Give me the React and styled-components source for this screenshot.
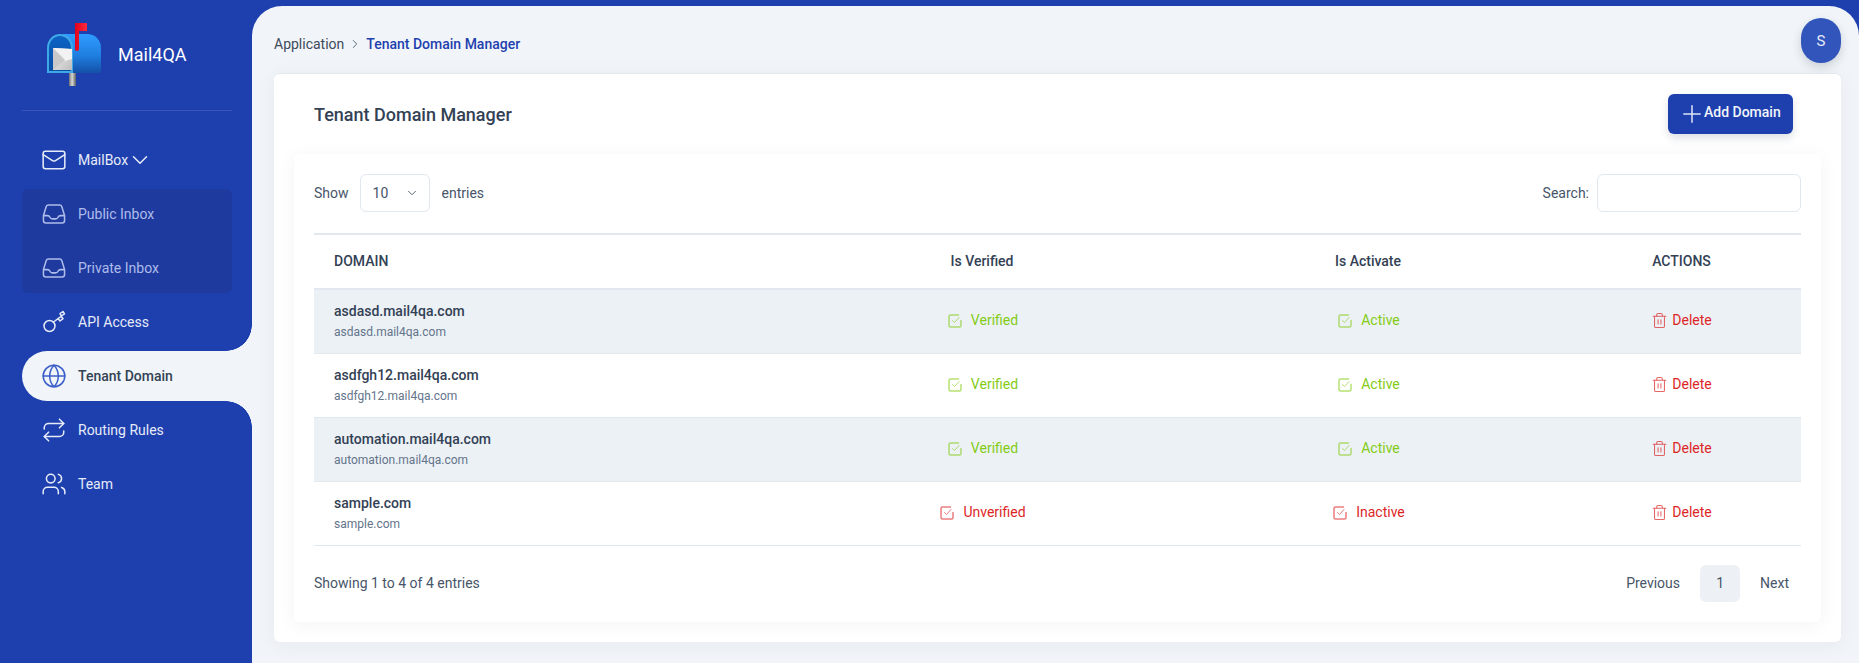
import React from 'react';
import styled, { createGlobalStyle, css } from 'styled-components';
import { Mail, ChevronDown, ChevronRight, Globe, Repeat, Users, Trash2, Plus } from 'lucide-react';

const domains = [
  { name: 'asdasd.mail4qa.com', verified: true },
  { name: 'asdfgh12.mail4qa.com', verified: true },
  { name: 'automation.mail4qa.com', verified: true },
  { name: 'sample.com', verified: false },
];

const InboxIcon = () => (
  <svg width="26" height="26" viewBox="0 0 24 24" fill="none" stroke="currentColor" strokeWidth="1.4" strokeLinecap="round" strokeLinejoin="round">
    <path d="M2.25 13.500h3.860a2.250 2.250 0 0 1 2.012 1.244l.256.512a2.250 2.250 0 0 0 2.013 1.244h3.218a2.250 2.250 0 0 0 2.013-1.244l.256-.512a2.250 2.250 0 0 1 2.013-1.244h3.859m-19.500.338V18a2.250 2.250 0 0 0 2.250 2.250h15A2.250 2.250 0 0 0 21.750 18v-4.162c0-.224-.034-.447-.1-.661L19.240 5.338a2.250 2.250 0 0 0-2.150-1.588H6.911a2.250 2.250 0 0 0-2.150 1.588L2.350 13.177a2.250 2.250 0 0 0-.1.661Z" />
  </svg>
);

const KeyIcon = () => (
  <svg width="26" height="26" viewBox="0 0 26 26" fill="none" stroke="currentColor" strokeWidth="1.5" strokeLinecap="round" strokeLinejoin="round">
    <circle cx="8.500" cy="17" r="5.500" />
    <path d="M12.500 13 22.500 5.500M17 9.600l2 2.400 3-2.400-2-2.400M20.500 7l-1.500-2.500 3-2 1.500 2.500" />
  </svg>
);

const CheckBoxIcon = () => (
  <svg width="14" height="14" viewBox="0 0 14 14" fill="none" stroke="currentColor" strokeWidth="1.5" strokeLinecap="round" strokeLinejoin="round">
    <path d="M13 6.500v5a1.500 1.500 0 0 1-1.500 1.500h-9A1.500 1.500 0 0 1 1 11.500v-9A1.500 1.500 0 0 1 2.500 1h8" />
    <path d="M4.500 6.500 6.500 8.500 11 3.500" strokeWidth="1" />
  </svg>
);

const MailboxLogo = () => (
  <svg width="56" height="64" viewBox="0 0 56 64">
    <defs>
      <linearGradient id="boxBody" x1="0" y1="0" x2="0" y2="1">
        <stop offset="0" stopColor="#2f9bff" />
        <stop offset="0.55" stopColor="#1f7fe0" />
        <stop offset="1" stopColor="#1450a8" />
      </linearGradient>
      <linearGradient id="boxDoor" x1="0" y1="0" x2="0" y2="1">
        <stop offset="0" stopColor="#0c62c4" />
        <stop offset="1" stopColor="#0a4fa6" />
      </linearGradient>
      <linearGradient id="letter" x1="0" y1="0" x2="1" y2="1">
        <stop offset="0" stopColor="#f4f4f4" />
        <stop offset="1" stopColor="#bdbdbd" />
      </linearGradient>
      <linearGradient id="post" x1="0" y1="0" x2="1" y2="0">
        <stop offset="0" stopColor="#6f6f6f" />
        <stop offset="0.45" stopColor="#d8d8d8" />
        <stop offset="1" stopColor="#5c5c5c" />
      </linearGradient>
      <linearGradient id="flag" x1="0" y1="0" x2="1" y2="0">
        <stop offset="0" stopColor="#e0001b" />
        <stop offset="1" stopColor="#ff2d3d" />
      </linearGradient>
    </defs>
    <rect x="23" y="49" width="7" height="14" fill="url(#post)" />
    <path d="M17 11h24c8 0 14 6 14 14v25H17z" fill="url(#boxBody)" />
    <path d="M1 50V25C1 17 7 11 14 11s13 6 13 14v25z" fill="#3fa9e8" />
    <path d="M3 48V25c0-6.500 5-12 11-12s11 5.500 11 12v23z" fill="url(#boxDoor)" />
    <path d="M7 25 26 26V47H7z" fill="url(#letter)" />
    <path d="M7 25 26 26V36L19 38z" fill="#f2f2f2" />
    <path d="M7 25 19 37 7 47z" fill="#c9c9c9" />
    <path d="M29 0h12v8H33v18a2 2 0 0 1-4 0z" fill="url(#flag)" />
  </svg>
);

const GlobalStyle = createGlobalStyle`
  html, body {
    margin: 0;
    padding: 0;
    overflow: hidden;
    background: #1e40af;
  }
  body {
    font-family: Roboto, "Liberation Sans", sans-serif;
    font-size: 14px;
    color: #334155;
  }
`;

const Page = styled.div`
  display: flex;
  height: 663px;
  overflow: hidden;
  background: #1e40af;
`;

const Sidebar = styled.aside`
  width: 252px;
  flex-shrink: 0;
  padding: 0 0 0 22px;
  box-sizing: border-box;
`;

const Brand = styled.div`
  display: flex;
  align-items: center;
  gap: 16px;
  height: 111px;
  margin-right: 20px;
  padding: 0 0 1px 24px;
  box-sizing: border-box;
  border-bottom: 1px solid rgba(255, 255, 255, 0.12);
  color: #fff;
  font-size: 18px;
`;

const Nav = styled.nav`
  display: flex;
  flex-direction: column;
  padding-top: 22px;
`;

const itemBase = css`
  display: flex;
  align-items: center;
  gap: 11px;
  flex-shrink: 0;
  height: 54px;
  padding-left: 19px;
  box-sizing: border-box;
`;

const NavItem = styled.div`
  ${itemBase}
  margin-right: 20px;
  color: #e6ebf8;
`;

const ActiveItem = styled.div`
  ${itemBase}
  position: relative;
  height: 50px;
  margin: 2px 0;
  border-radius: 25px 0 0 25px;
  background: #f1f5f9;
  color: #334155;
  font-weight: 500;
  svg {
    color: #3c5fc9;
  }
  &::before,
  &::after {
    content: '';
    position: absolute;
    right: 0;
    width: 26px;
    height: 26px;
    background: #f1f5f9;
  }
  &::before {
    top: -26px;
    mask: radial-gradient(circle at 0 0, transparent 25.5px, #000 26px);
  }
  &::after {
    bottom: -26px;
    mask: radial-gradient(circle at 0 100%, transparent 25.5px, #000 26px);
  }
`;

const SubMenu = styled.div`
  display: flex;
  flex-direction: column;
  justify-content: center;
  height: 104px;
  margin: 2px 20px 2px 0;
  border-radius: 6px;
  background: #1e3a9f;
`;

const SubItem = styled.div`
  ${itemBase}
  color: #aebcea;
`;

const MenuCaret = styled(ChevronDown)`
  margin-left: -12px;
`;

const Main = styled.main`
  flex: 1;
  min-width: 0;
  margin-top: 6px;
  padding: 12px 18px 20px 22px;
  box-sizing: border-box;
  background: #f1f5f9;
  border-radius: 30px 30px 0 0;
`;

const TopBar = styled.div`
  display: flex;
  justify-content: space-between;
  height: 45px;
  margin-bottom: 10px;
`;

const Crumbs = styled.div`
  display: flex;
  align-items: center;
  gap: 4px;
  height: 45px;
  padding-top: 6px;
  box-sizing: border-box;
  color: #3d4a5c;
  svg {
    color: #475569;
  }
`;

const CrumbActive = styled.span`
  color: #1e40af;
  font-weight: 500;
`;

const Avatar = styled.div`
  display: flex;
  align-items: center;
  justify-content: center;
  width: 40px;
  height: 45px;
  border-radius: 20px;
  background: #3155bb;
  color: #e6ebf8;
  font-size: 15px;
  box-shadow: 0 4px 10px rgba(30, 41, 59, 0.18);
`;

const Card = styled.section`
  padding-bottom: 20px;
  border-top: 1px solid #e2e8f0;
  border-radius: 6px;
  background: #fff;
  box-shadow: 0 3px 20px rgba(30, 41, 59, 0.05);
`;

const CardHead = styled.div`
  display: flex;
  align-items: center;
  justify-content: space-between;
  height: 80px;
  padding: 0 48px 0 40px;
`;

const Title = styled.h2`
  margin: 0;
  color: #334155;
  font-size: 18px;
  font-weight: 500;
`;

const AddButton = styled.button`
  display: flex;
  align-items: center;
  gap: 0;
  height: 40px;
  width: 125px;
  padding: 0 0 0 10px;
  box-sizing: border-box;
  border: 0;
  border-radius: 6px;
  background: #1e40af;
  color: #f1f5f9;
  font: 500 14px Roboto, sans-serif;
  box-shadow: 0 4px 8px rgba(30, 41, 59, 0.15);
  svg {
    flex-shrink: 0;
    color: #dce3f5;
  }
  span {
    margin-top: -4px;
    margin-left: -2px;
  }
`;

const Panel = styled.div`
  margin: 0 20px;
  padding: 20px;
  border-radius: 6px;
  background: #fff;
  box-shadow: 0 3px 20px rgba(30, 41, 59, 0.05);
`;

const Controls = styled.div`
  display: flex;
  align-items: center;
  justify-content: space-between;
  height: 38px;
  margin-bottom: 21px;
`;

const ControlGroup = styled.label`
  display: flex;
  align-items: center;
  gap: 11px;
  color: #475569;
`;

const SelectBox = styled.div`
  display: flex;
  align-items: center;
  justify-content: space-between;
  width: 70px;
  height: 38px;
  margin-right: 1px;
  padding: 0 10px 0 12px;
  box-sizing: border-box;
  border: 1px solid #e2e8f0;
  border-radius: 6px;
  svg {
    color: #475569;
  }
`;

const SearchBox = styled.input`
  width: 204px;
  height: 38px;
  margin-left: -3px;
  box-sizing: border-box;
  border: 1px solid #e2e8f0;
  border-radius: 6px;
  background: #fff;
`;

const Table = styled.table`
  width: 100%;
  table-layout: fixed;
  border-collapse: collapse;
  border-top: 2px solid #e2e8f0;
`;

const Th = styled.th`
  height: 55px;
  padding: 0 20px 2px;
  box-sizing: border-box;
  border-bottom: 2px solid #e2e8f0;
  color: #334155;
  font-size: 14px;
  font-weight: 500;
  text-align: ${({ $left }) => ($left ? 'left' : 'center')};
`;

const Row = styled.tr`
  background: ${({ $striped }) => ($striped ? '#ecf1f5' : '#fff')};
`;

const Td = styled.td`
  height: 64px;
  padding: 0 20px;
  box-sizing: border-box;
  border-bottom: 1px solid #e2e8f0;
  text-align: ${({ $left }) => ($left ? 'left' : 'center')};
`;

const DomainName = styled.div`
  margin-bottom: 6px;
  color: #334155;
  font-weight: 500;
`;

const DomainSub = styled.div`
  color: #64748b;
  font-size: 12px;
`;

const Status = styled.span`
  display: inline-flex;
  align-items: center;
  gap: 9px;
  padding-left: 2px;
  color: ${({ $color }) => $color};
  svg {
    opacity: 0.6;
    margin-top: 2px;
  }
`;

const DeleteAction = styled.span`
  display: inline-flex;
  align-items: center;
  gap: 4px;
  color: #dc2626;
  svg {
    opacity: 0.7;
    margin-top: 2px;
  }
`;

const Footer = styled.div`
  display: flex;
  align-items: center;
  justify-content: space-between;
  margin-top: 19px;
  color: #475569;
`;

const Pager = styled.div`
  display: flex;
  align-items: center;
  gap: 8px;
`;

const PageButton = styled.div`
  display: flex;
  align-items: center;
  justify-content: center;
  height: 37px;
  padding: 0 12px;
  border-radius: 6px;
  ${({ $current }) =>
    $current &&
    css`
      width: 40px;
      padding: 0;
      box-sizing: border-box;
      background: #edf1f6;
    `}
`;

const LIME = '#84cc16';
const RED = '#dc2626';

export default function App() {
  return (
    <Page>
      <GlobalStyle />
      <Sidebar>
        <Brand>
          <MailboxLogo />
          <span>Mail4QA</span>
        </Brand>
        <Nav>
          <NavItem>
            <Mail size={26} strokeWidth={1.4} />
            <span>MailBox</span>
            <MenuCaret size={26} strokeWidth={1.4} />
          </NavItem>
          <SubMenu>
            <SubItem>
              <InboxIcon />
              <span>Public Inbox</span>
            </SubItem>
            <SubItem>
              <InboxIcon />
              <span>Private Inbox</span>
            </SubItem>
          </SubMenu>
          <NavItem>
            <KeyIcon />
            <span>API Access</span>
          </NavItem>
          <ActiveItem>
            <Globe size={26} strokeWidth={1.4} />
            <span>Tenant Domain</span>
          </ActiveItem>
          <NavItem>
            <Repeat size={26} strokeWidth={1.4} />
            <span>Routing Rules</span>
          </NavItem>
          <NavItem>
            <Users size={26} strokeWidth={1.4} />
            <span>Team</span>
          </NavItem>
        </Nav>
      </Sidebar>
      <Main>
        <TopBar>
          <Crumbs>
            <span>Application</span>
            <ChevronRight size={14} strokeWidth={1.5} />
            <CrumbActive>Tenant Domain Manager</CrumbActive>
          </Crumbs>
          <Avatar>S</Avatar>
        </TopBar>
        <Card>
          <CardHead>
            <Title>Tenant Domain Manager</Title>
            <AddButton>
              <Plus size={28} strokeWidth={1.3} />
              <span>Add Domain</span>
            </AddButton>
          </CardHead>
          <Panel>
            <Controls>
              <ControlGroup>
                Show
                <SelectBox>
                  10
                  <ChevronDown size={14} strokeWidth={1.5} />
                </SelectBox>
                entries
              </ControlGroup>
              <ControlGroup>
                Search:
                <SearchBox />
              </ControlGroup>
            </Controls>
            <Table>
              <colgroup>
                <col style={{ width: 476 }} />
                <col style={{ width: 384 }} />
                <col style={{ width: 388 }} />
                <col style={{ width: 239 }} />
              </colgroup>
              <thead>
                <tr>
                  <Th $left>DOMAIN</Th>
                  <Th>Is Verified</Th>
                  <Th>Is Activate</Th>
                  <Th>ACTIONS</Th>
                </tr>
              </thead>
              <tbody>
                {domains.map((d, i) => (
                  <Row key={d.name} $striped={i % 2 === 0}>
                    <Td $left>
                      <DomainName>{d.name}</DomainName>
                      <DomainSub>{d.name}</DomainSub>
                    </Td>
                    <Td>
                      <Status $color={d.verified ? LIME : RED}>
                        <CheckBoxIcon />
                        {d.verified ? 'Verified' : 'Unverified'}
                      </Status>
                    </Td>
                    <Td>
                      <Status $color={d.verified ? LIME : RED}>
                        <CheckBoxIcon />
                        {d.verified ? 'Active' : 'Inactive'}
                      </Status>
                    </Td>
                    <Td>
                      <DeleteAction>
                        <Trash2 size={17} strokeWidth={1.5} />
                        Delete
                      </DeleteAction>
                    </Td>
                  </Row>
                ))}
              </tbody>
            </Table>
            <Footer>
              <span>Showing 1 to 4 of 4 entries</span>
              <Pager>
                <PageButton>Previous</PageButton>
                <PageButton $current>1</PageButton>
                <PageButton>Next</PageButton>
              </Pager>
            </Footer>
          </Panel>
        </Card>
      </Main>
    </Page>
  );
}
